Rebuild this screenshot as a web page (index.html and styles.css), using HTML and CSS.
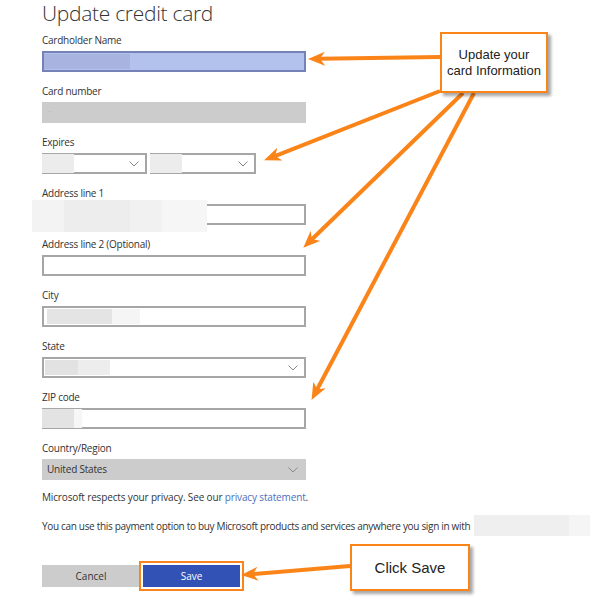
FILE: index.html
```html
<!DOCTYPE html>
<html lang="en">
<head>
    <meta charset="UTF-8">
    <title>Update credit card</title>
    <link rel="stylesheet" href="styles.css">
</head>
<body>
    <div class="page">
        <div class="card-form">
            <h1 class="title">Update credit card</h1>

            <div class="field">
                <label class="label">Cardholder Name</label>
                <div class="input input-selected"><span class="mask mask-name"></span></div>
            </div>

            <div class="field">
                <label class="label">Card number</label>
                <div class="input input-disabled"><span class="dots">··</span></div>
            </div>

            <div class="field">
                <label class="label">Expires</label>
                <div class="expires-row">
                    <div class="input select select-month">
                        <span class="mask mask-short"></span>
                        <svg class="chevron" viewBox="0 0 10 6"><polyline points="0.5,0.5 5,5 9.5,0.5"/></svg>
                    </div>
                    <div class="input select select-year">
                        <span class="mask mask-short"></span>
                        <svg class="chevron" viewBox="0 0 10 6"><polyline points="0.5,0.5 5,5 9.5,0.5"/></svg>
                    </div>
                </div>
            </div>

            <div class="field">
                <label class="label">Address line 1</label>
                <div class="input input-address">
                    <span class="patch"></span>
                </div>
            </div>

            <div class="field">
                <label class="label">Address line 2 (Optional)</label>
                <div class="input"></div>
            </div>

            <div class="field">
                <label class="label">City</label>
                <div class="input"><span class="mask mask-city"></span></div>
            </div>

            <div class="field">
                <label class="label">State</label>
                <div class="input select">
                    <span class="mask mask-state"></span>
                    <svg class="chevron" viewBox="0 0 10 6"><polyline points="0.5,0.5 5,5 9.5,0.5"/></svg>
                </div>
            </div>

            <div class="field">
                <label class="label">ZIP code</label>
                <div class="input"><span class="mask mask-zip"></span></div>
            </div>

            <div class="field">
                <label class="label">Country/Region</label>
                <div class="input select input-disabled">
                    <span class="value">United States</span>
                    <svg class="chevron" viewBox="0 0 10 6"><polyline points="0.5,0.5 5,5 9.5,0.5"/></svg>
                </div>
            </div>

            <p class="note">Microsoft respects your privacy. See our <a class="link" href="#">privacy statement</a>.</p>
            <p class="note note-wide">You can use this payment option to buy Microsoft products and services anywhere you sign in with<span class="mask-email"></span></p>

            <div class="actions">
                <button class="btn btn-cancel">Cancel</button>
                <button class="btn btn-save">Save</button>
            </div>
        </div>

        <!-- orange callouts drawn on top of the form -->
        <svg class="arrows" width="600" height="598" viewBox="0 0 600 598">
            <defs>
                <marker id="head" markerUnits="userSpaceOnUse" markerWidth="17" markerHeight="14" viewBox="0 0 17 14" refX="6" refY="7" orient="auto">
                    <path d="M0,0 L17,7 L0,14 L5,7 Z" fill="#fb8419"/>
                </marker>
            </defs>
            <g stroke="#fb8419" stroke-width="4" fill="none" marker-end="url(#head)">
                <line x1="440" y1="57" x2="319" y2="58.8"/>
                <line x1="440" y1="91" x2="274.3" y2="156.3"/>
                <line x1="463" y1="93" x2="311.2" y2="240"/>
                <line x1="474" y1="93" x2="316.7" y2="390.2"/>
                <line x1="350" y1="566" x2="252" y2="574.2"/>
            </g>
        </svg>

        <div class="callout callout-card">Update your<br>card Information</div>
        <div class="callout callout-save">Click Save</div>
    </div>
</body>
</html>
```

FILE: styles.css
```css
* {
    margin: 0;
    padding: 0;
    box-sizing: border-box;
}

body {
    background: #fff;
    font-family: 'Open Sans', 'Noto Sans', sans-serif;
    color: #333;
}

.page {
    position: relative;
    width: 600px;
    height: 598px;
    overflow: hidden;
}

.card-form {
    width: 306px;
    padding-left: 42px;
}

.title {
    font-size: 21px;
    font-weight: 300;
    line-height: 26px;
    color: #333;
    margin-top: 0;
    margin-bottom: 9px;
    letter-spacing: -0.3px;
}

.field {
    margin-bottom: 14px;
}

.label {
    display: block;
    font-size: 10px;
    line-height: 10px;
    margin-bottom: 6px;
    letter-spacing: -0.25px;
    color: #333;
}

.input {
    position: relative;
    height: 21px;
    border: 2px solid #a6a6a6;
    background: #fff;
}

.input-selected {
    background: #b3c2ec;
    border-color: #7482b8;
}

.input-disabled {
    background: #cccccc;
    border-color: #cccccc;
}

.dots {
    position: absolute;
    left: 3px;
    top: 1px;
    font-size: 9px;
    color: #b8b8b8;
}

.expires-row {
    display: flex;
    gap: 3px;
}

.select-month {
    width: 105px;
}

.select-year {
    width: 106px;
}

.chevron {
    position: absolute;
    right: 6px;
    top: 6px;
    width: 10px;
    height: 6px;
    fill: none;
    stroke: #888;
    stroke-width: 1;
}

.value {
    position: absolute;
    left: 3px;
    top: 1px;
    font-size: 10px;
    line-height: 15px;
    letter-spacing: -0.2px;
    color: #333;
}

/* blurred-out personal details */
.mask {
    position: absolute;
    top: 1px;
    bottom: 1px;
    left: 0;
}

.mask-name {
    width: 86px;
    background: #a8b4df;
}

.mask-short {
    left: -2px;
    top: -1px;
    bottom: -1px;
    width: 32px;
    background: #ececec;
}

.mask-city {
    left: 3px;
    width: 93px;
    background: linear-gradient(to right, #e4e4e4 0, #e4e4e4 65px, #f5f5f5 65px);
}

.mask-state {
    left: 1px;
    width: 65px;
    background: linear-gradient(to right, #e2e2e2 0, #e2e2e2 33px, #ededed 33px);
}

.mask-zip {
    left: -2px;
    top: -1px;
    bottom: -1px;
    width: 40px;
    background: linear-gradient(to right, #e3e3e3 0, #e3e3e3 32px, #f6f6f6 32px);
}

.patch {
    position: absolute;
    left: -12px;
    top: -6px;
    width: 175px;
    height: 32px;
    background: linear-gradient(to right, #f3f3f3 0, #f3f3f3 32px, #ededed 32px, #ededed 98px, #f1f1f1 98px, #f1f1f1 130px, #f6f6f6 130px);
}

.note {
    font-size: 10px;
    line-height: 14px;
    letter-spacing: -0.15px;
    color: #333;
    margin-top: -4px;
    white-space: nowrap;
}

.note-wide {
    margin-top: 15px;
    letter-spacing: -0.32px;
    position: relative;
}

.link {
    color: #4f6dbe;
    text-decoration: none;
}

.mask-email {
    position: absolute;
    left: 432px;
    top: -4px;
    width: 116px;
    height: 21px;
    background: linear-gradient(to right, #efefef 0, #efefef 95px, #f5f5f5 95px);
}

.actions {
    display: flex;
    gap: 3px;
    margin-top: 32px;
}

.btn {
    height: 22px;
    border: none;
    font-family: inherit;
    font-size: 10px;
}

.btn-cancel {
    width: 98px;
    background: #cccccc;
    color: #333;
}

.btn-save {
    width: 97px;
    background: #3253b5;
    color: #fff;
    outline: 2px solid #f7861c;
    outline-offset: 2px;
}

.arrows {
    position: absolute;
    left: 0;
    top: 0;
    pointer-events: none;
}

.callout {
    position: absolute;
    background: #fff;
    border: 2px solid #fb8419;
    box-shadow: 3px 3px 3px rgba(0, 0, 0, 0.35);
    font-family: 'Liberation Sans', Arial, sans-serif;
    color: #222;
    text-align: center;
    display: flex;
    align-items: center;
    justify-content: center;
}

.callout-card {
    left: 440px;
    top: 32px;
    width: 108px;
    height: 61px;
    font-size: 13px;
    line-height: 16px;
}

.callout-save {
    left: 350px;
    top: 544px;
    width: 120px;
    height: 47px;
    font-size: 15px;
}
```
